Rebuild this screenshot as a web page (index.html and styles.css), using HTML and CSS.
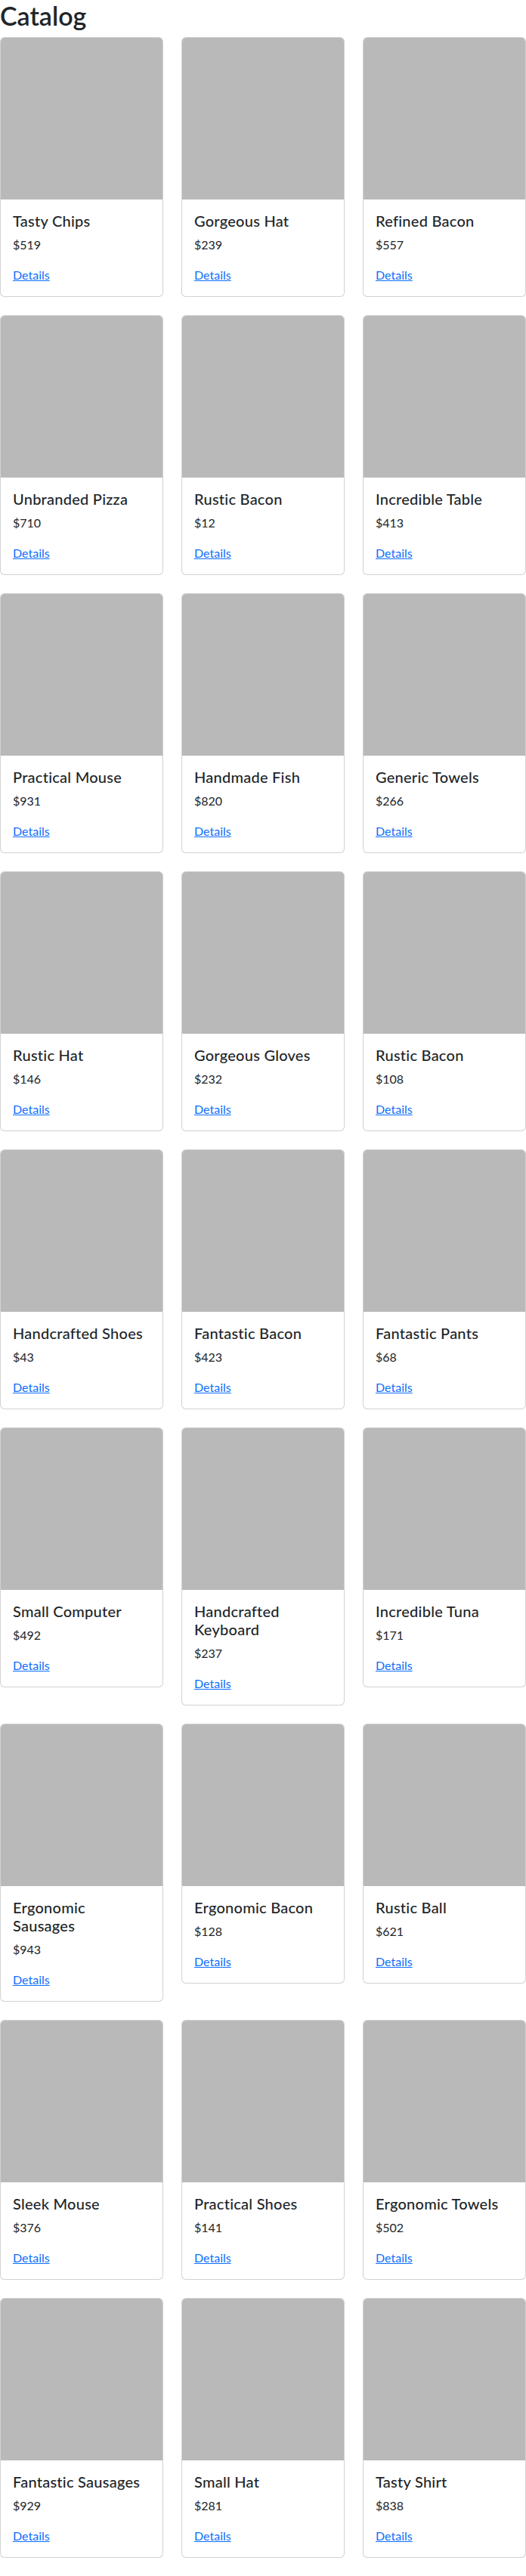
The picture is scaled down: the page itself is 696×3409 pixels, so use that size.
FILE: index.html
```html
<!DOCTYPE html>
<html lang="en">
<head>
<meta charset="utf-8">
<title>Catalog</title>
<link rel="stylesheet" href="styles.css">
</head>
<body>
<main class="page">
  <h1 class="page-title">Catalog</h1>
  <div class="grid">
    <div class="card"><div class="card-img"></div><div class="card-body"><h5 class="card-title">Tasty Chips</h5><p class="card-price">$519</p><a class="card-link" href="#">Details</a></div></div>
    <div class="card"><div class="card-img"></div><div class="card-body"><h5 class="card-title">Gorgeous Hat</h5><p class="card-price">$239</p><a class="card-link" href="#">Details</a></div></div>
    <div class="card"><div class="card-img"></div><div class="card-body"><h5 class="card-title">Refined Bacon</h5><p class="card-price">$557</p><a class="card-link" href="#">Details</a></div></div>

    <div class="card"><div class="card-img"></div><div class="card-body"><h5 class="card-title">Unbranded Pizza</h5><p class="card-price">$710</p><a class="card-link" href="#">Details</a></div></div>
    <div class="card"><div class="card-img"></div><div class="card-body"><h5 class="card-title">Rustic Bacon</h5><p class="card-price">$12</p><a class="card-link" href="#">Details</a></div></div>
    <div class="card"><div class="card-img"></div><div class="card-body"><h5 class="card-title">Incredible Table</h5><p class="card-price">$413</p><a class="card-link" href="#">Details</a></div></div>

    <div class="card"><div class="card-img"></div><div class="card-body"><h5 class="card-title">Practical Mouse</h5><p class="card-price">$931</p><a class="card-link" href="#">Details</a></div></div>
    <div class="card"><div class="card-img"></div><div class="card-body"><h5 class="card-title">Handmade Fish</h5><p class="card-price">$820</p><a class="card-link" href="#">Details</a></div></div>
    <div class="card"><div class="card-img"></div><div class="card-body"><h5 class="card-title">Generic Towels</h5><p class="card-price">$266</p><a class="card-link" href="#">Details</a></div></div>

    <div class="card"><div class="card-img"></div><div class="card-body"><h5 class="card-title">Rustic Hat</h5><p class="card-price">$146</p><a class="card-link" href="#">Details</a></div></div>
    <div class="card"><div class="card-img"></div><div class="card-body"><h5 class="card-title">Gorgeous Gloves</h5><p class="card-price">$232</p><a class="card-link" href="#">Details</a></div></div>
    <div class="card"><div class="card-img"></div><div class="card-body"><h5 class="card-title">Rustic Bacon</h5><p class="card-price">$108</p><a class="card-link" href="#">Details</a></div></div>

    <div class="card"><div class="card-img"></div><div class="card-body"><h5 class="card-title">Handcrafted Shoes</h5><p class="card-price">$43</p><a class="card-link" href="#">Details</a></div></div>
    <div class="card"><div class="card-img"></div><div class="card-body"><h5 class="card-title">Fantastic Bacon</h5><p class="card-price">$423</p><a class="card-link" href="#">Details</a></div></div>
    <div class="card"><div class="card-img"></div><div class="card-body"><h5 class="card-title">Fantastic Pants</h5><p class="card-price">$68</p><a class="card-link" href="#">Details</a></div></div>

    <div class="card"><div class="card-img"></div><div class="card-body"><h5 class="card-title">Small Computer</h5><p class="card-price">$492</p><a class="card-link" href="#">Details</a></div></div>
    <div class="card"><div class="card-img"></div><div class="card-body"><h5 class="card-title">Handcrafted Keyboard</h5><p class="card-price">$237</p><a class="card-link" href="#">Details</a></div></div>
    <div class="card"><div class="card-img"></div><div class="card-body"><h5 class="card-title">Incredible Tuna</h5><p class="card-price">$171</p><a class="card-link" href="#">Details</a></div></div>

    <div class="card"><div class="card-img"></div><div class="card-body"><h5 class="card-title">Ergonomic Sausages</h5><p class="card-price">$943</p><a class="card-link" href="#">Details</a></div></div>
    <div class="card"><div class="card-img"></div><div class="card-body"><h5 class="card-title">Ergonomic Bacon</h5><p class="card-price">$128</p><a class="card-link" href="#">Details</a></div></div>
    <div class="card"><div class="card-img"></div><div class="card-body"><h5 class="card-title">Rustic Ball</h5><p class="card-price">$621</p><a class="card-link" href="#">Details</a></div></div>

    <div class="card"><div class="card-img"></div><div class="card-body"><h5 class="card-title">Sleek Mouse</h5><p class="card-price">$376</p><a class="card-link" href="#">Details</a></div></div>
    <div class="card"><div class="card-img"></div><div class="card-body"><h5 class="card-title">Practical Shoes</h5><p class="card-price">$141</p><a class="card-link" href="#">Details</a></div></div>
    <div class="card"><div class="card-img"></div><div class="card-body"><h5 class="card-title">Ergonomic Towels</h5><p class="card-price">$502</p><a class="card-link" href="#">Details</a></div></div>

    <div class="card"><div class="card-img"></div><div class="card-body"><h5 class="card-title">Fantastic Sausages</h5><p class="card-price">$929</p><a class="card-link" href="#">Details</a></div></div>
    <div class="card"><div class="card-img"></div><div class="card-body"><h5 class="card-title">Small Hat</h5><p class="card-price">$281</p><a class="card-link" href="#">Details</a></div></div>
    <div class="card"><div class="card-img"></div><div class="card-body"><h5 class="card-title">Tasty Shirt</h5><p class="card-price">$838</p><a class="card-link" href="#">Details</a></div></div>
  </div>
</main>
</body>
</html>
```
FILE: styles.css
```css
* { box-sizing: border-box; }
html, body { margin: 0; padding: 0; background: #fff; }
body {
  font-family: Lato, "Liberation Sans", sans-serif;
  font-size: 16px;
  line-height: 1.5;
  color: #212529;
}
.page { padding-bottom: 24px; }
.page-title {
  margin: 0 0 8px;
  font-size: 34px;
  font-weight: 600;
  line-height: 41px;
  color: #212529;
}
.grid {
  display: grid;
  grid-template-columns: repeat(3, 1fr);
  column-gap: 24px;
  row-gap: 24px;
  align-items: start;
}
.card {
  display: flex;
  flex-direction: column;
  border: 1px solid rgba(0, 0, 0, 0.175);
  border-radius: 6px;
  overflow: hidden;
  background: #fff;
}
.card-img {
  height: 214px;
  background: #b9b9b9;
}
.card-body { padding: 16px; }
.card-title {
  margin: 0 0 8px;
  font-size: 20px;
  font-weight: 500;
  line-height: 24px;
  letter-spacing: 0.25px;
  color: #212529;
}
.card-price {
  margin: 0 0 16px;
  font-size: 16px;
  line-height: 24px;
}
.card-link {
  display: inline-block;
  font-size: 16px;
  line-height: 24px;
  color: #0d6efd;
  text-decoration: underline;
}
```
